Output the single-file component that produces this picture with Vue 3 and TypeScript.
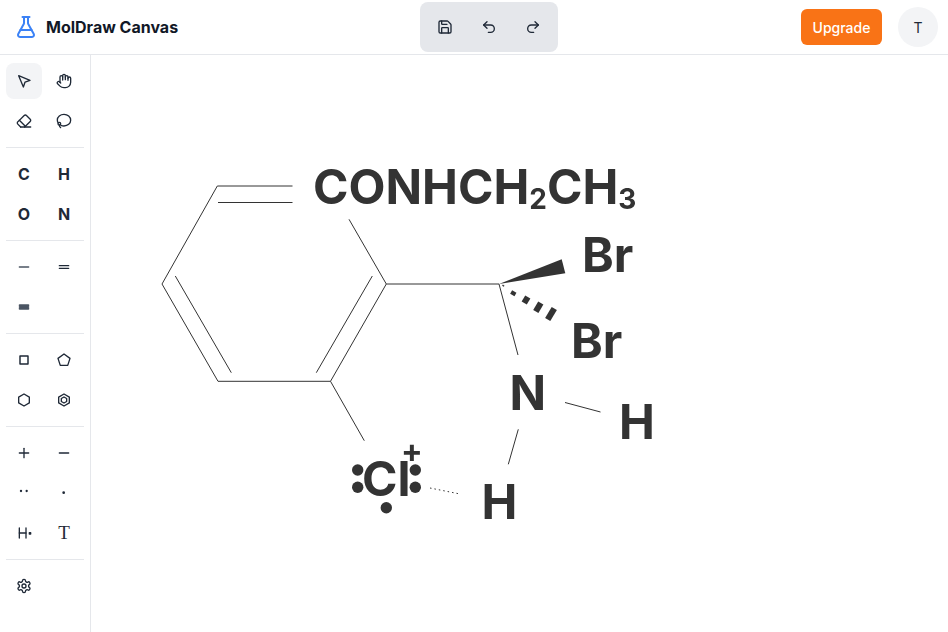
<script setup lang="ts">
interface Tool {
  id: string;
  label?: string;
  serif?: boolean;
  muted?: boolean;
  paths?: string[];
  width?: number;
}

const toolGroups: Tool[][] = [
  [
    { id: 'select', paths: ['m4 4 7.07 17 2.51-7.39L21 11.07z'] },
    {
      id: 'pan',
      paths: [
        'M18 11V6a2 2 0 0 0-2-2a2 2 0 0 0-2 2',
        'M14 10V4a2 2 0 0 0-2-2a2 2 0 0 0-2 2v2',
        'M10 10.5V6a2 2 0 0 0-2-2a2 2 0 0 0-2 2v8',
        'M18 8a2 2 0 1 1 4 0v6a8 8 0 0 1-8 8h-2c-2.8 0-4.5-.86-5.99-2.34l-3.6-3.6a2 2 0 0 1 2.83-2.82L7 15',
      ],
    },
    {
      id: 'erase',
      paths: [
        'm7 21-4.3-4.3c-1-1-1-2.5 0-3.4l9.6-9.6c1-1 2.5-1 3.4 0l5.6 5.6c1 1 1 2.5 0 3.4L13 21',
        'M22 21H7',
        'm5 11 9 9',
      ],
    },
    {
      id: 'lasso',
      paths: [
        'M7 22a5 5 0 0 1-2-4',
        'M3.3 15A8 8 0 0 1 2 10.500C2 5.500 6.500 2 12 2s10 3.800 10 8.800-4.500 8.700-10 8.700a11 11 0 0 1-4.500-1',
        'M5 18a2 2 0 1 0 0-4 2 2 0 0 0 0 4z',
      ],
    },
  ],
  [
    { id: 'c', label: 'C' },
    { id: 'h', label: 'H' },
    { id: 'o', label: 'O' },
    { id: 'n', label: 'N' },
  ],
  [
    { id: 'single', paths: ['M5 12h14'], muted: true },
    { id: 'double', paths: ['M5 10h14', 'M5 14h14'], width: 2 },
    { id: 'triple', paths: ['M5.500 9.500h13', 'M5.500 12h13', 'M5.500 14.500h13'], width: 3, muted: true },
  ],
  [
    { id: 'square', paths: ['M6 6h12v12H6z'], width: 2.200 },
    { id: 'pentagon', paths: ['M12 3l9 6.6-3.4 10.4H6.4L3 9.6z'] },
    { id: 'hexagon', paths: ['M12 3l8 4.6v8.8L12 21l-8-4.6V7.6z'] },
    { id: 'benzene', paths: ['M12 3l8 4.6v8.8L12 21l-8-4.6V7.6z', 'M12 7.500l4 2.300v4.400l-4 2.300-4-2.300V9.800z'] },
  ],
  [
    { id: 'plus', paths: ['M5 12h14', 'M12 5v14'] },
    { id: 'minus', paths: ['M5 12h14'] },
    { id: 'pair', paths: ['M7.500 9h.01', 'M16 9h.01'], width: 3.500 },
    { id: 'radical', paths: ['M11.500 11.500h.01'], width: 4 },
    { id: 'lewis', paths: ['M5 4.500v15', 'M15 4.500v15', 'M5 12h10', 'M20 11.500h2v2h-2z'] },
    { id: 'text', label: 'T', serif: true },
  ],
  [
    {
      id: 'settings',
      paths: [
        'M12.22 2h-.44a2 2 0 0 0-2 2v.18a2 2 0 0 1-1 1.73l-.43.25a2 2 0 0 1-2 0l-.15-.08a2 2 0 0 0-2.73.73l-.22.38a2 2 0 0 0 .73 2.73l.15.1a2 2 0 0 1 1 1.72v.51a2 2 0 0 1-1 1.74l-.15.09a2 2 0 0 0-.73 2.73l.22.38a2 2 0 0 0 2.73.73l.15-.08a2 2 0 0 1 2 0l.43.25a2 2 0 0 1 1 1.73V20a2 2 0 0 0 2 2h.44a2 2 0 0 0 2-2v-.18a2 2 0 0 1 1-1.73l.43-.25a2 2 0 0 1 2 0l.15.08a2 2 0 0 0 2.73-.73l.22-.39a2 2 0 0 0-.73-2.73l-.15-.08a2 2 0 0 1-1-1.74v-.5a2 2 0 0 1 1-1.74l.15-.09a2 2 0 0 0 .73-2.73l-.22-.38a2 2 0 0 0-2.73-.73l-.15.08a2 2 0 0 1-2 0l-.43-.25a2 2 0 0 1-1-1.73V4a2 2 0 0 0-2-2z',
        'M9 12a3 3 0 1 0 6 0a3 3 0 1 0-6 0',
      ],
    },
  ],
];

const actions = [
  {
    id: 'save',
    paths: [
      'M15.2 3a2 2 0 0 1 1.4.6l3.8 3.8a2 2 0 0 1 .6 1.4V19a2 2 0 0 1-2 2H5a2 2 0 0 1-2-2V5a2 2 0 0 1 2-2z',
      'M17 21v-7a1 1 0 0 0-1-1H8a1 1 0 0 0-1 1v7',
      'M7 3v4a1 1 0 0 0 1 1h7',
    ],
  },
  { id: 'undo', paths: ['M9 14 4 9l5-5', 'M4 9h10.5a5.5 5.5 0 0 1 5.5 5.5a5.5 5.5 0 0 1-5.5 5.5H11'] },
  { id: 'redo', paths: ['m15 14 5-5-5-5', 'M20 9H9.5A5.5 5.5 0 0 0 4 14.5A5.5 5.5 0 0 0 9.5 20H13'] },
];

// bonds, in page coordinates (the svg viewBox starts where the canvas starts)
const bonds = [
  'M217.300 186H292.500',
  'M218 202.500H292.500',
  'M217.300 186L162 284L218 381.300H330.500L386.300 284L349 219.300',
  'M175.300 276L231.300 372.700',
  'M372.300 276L316.300 372.700',
  'M330.500 381.300L364.300 440.700',
  'M386.300 284H499',
  'M499 284L518 355',
  'M565 402.500L600.500 412',
  'M518.300 429.300L508.300 464.300',
];

const hashes = [
  { d: 'M502.900 286.300L503.700 285.100', w: 2 },
  { d: 'M512.300 295L514.300 291.600', w: 5 },
  { d: 'M524.200 303L527.800 297', w: 6 },
  { d: 'M535.800 311.600L540.800 303', w: 6 },
  { d: 'M547.700 319.600L554.300 308.400', w: 6 },
];

const lonePairs = [
  [357.7, 470],
  [357.7, 487.3],
  [415.3, 470],
  [415.3, 487.3],
  [386.3, 507.7],
];
</script>

<template>
  <div class="app">
    <header class="topbar">
      <div class="brand">
        <svg class="logo" viewBox="0 0 24 24">
          <path d="M14 2v6a2 2 0 0 0 .245.96l5.51 10.08A2 2 0 0 1 18 22H6a2 2 0 0 1-1.755-2.96l5.51-10.08A2 2 0 0 0 10 8V2" />
          <path d="M6.453 15h11.094" />
          <path d="M8.500 2h7" />
        </svg>
        <span class="brand-name">MolDraw Canvas</span>
      </div>
      <div class="actions">
        <button v-for="action in actions" :key="action.id" class="action">
          <svg class="icon" viewBox="0 0 24 24">
            <path v-for="d in action.paths" :key="d" :d="d" />
          </svg>
        </button>
      </div>
      <div class="account">
        <button class="upgrade">Upgrade</button>
        <div class="avatar">T</div>
      </div>
    </header>

    <div class="workspace">
      <aside class="sidebar">
        <div v-for="(group, i) in toolGroups" :key="i" class="tool-group">
          <button
            v-for="tool in group"
            :key="tool.id"
            class="tool"
            :class="{ active: tool.id === 'select', serif: tool.serif, muted: tool.muted }"
          >
            <template v-if="tool.label">{{ tool.label }}</template>
            <svg v-else class="icon" viewBox="0 0 24 24" :style="{ strokeWidth: tool.width }">
              <path v-for="d in tool.paths" :key="d" :d="d" />
            </svg>
          </button>
        </div>
      </aside>

      <main class="canvas">
        <svg class="drawing" viewBox="91 55 857 577">
          <path v-for="d in bonds" :key="d" :d="d" class="bond" />
          <path d="M499 284L561.700 259.300L565.300 273.300Z" class="wedge" />
          <path v-for="h in hashes" :key="h.d" :d="h.d" class="hash" :style="{ strokeWidth: h.w }" />
          <path d="M430 488L460 494" class="dots" />

          <text x="313" y="203.500" class="atom">CONHCH<tspan class="sub" dy="5">2</tspan><tspan dy="-5">CH</tspan><tspan class="sub" dy="5">3</tspan></text>
          <text x="582" y="271.500" class="atom">Br</text>
          <text x="571" y="357.500" class="atom">Br</text>
          <text x="509.500" y="410" class="atom">N</text>
          <text x="619" y="439" class="atom">H</text>
          <text x="481.500" y="519" class="atom">H</text>
          <text x="362" y="496" class="atom">Cl</text>
          <text x="401" y="462" class="charge">+</text>
          <circle v-for="p in lonePairs" :key="p[0] + '-' + p[1]" :cx="p[0]" :cy="p[1]" r="5.700" class="wedge" />
        </svg>
      </main>
    </div>
  </div>
</template>

<style scoped>
.app {
  display: flex;
  flex-direction: column;
  height: 632px;
  font-family: Inter, "Liberation Sans", sans-serif;
  color: #111827;
  background: #fff;
  overflow: hidden;
}

.topbar {
  display: flex;
  align-items: center;
  justify-content: space-between;
  height: 54px;
  padding: 0 10px 0 14px;
  border-bottom: 1px solid #e5e7eb;
  flex: none;
}

.brand,
.account {
  display: flex;
  align-items: center;
}

.brand {
  gap: 8px;
  width: 176px;
}

.account {
  justify-content: flex-end;
  gap: 16px;
  width: 150px;
}

.logo {
  width: 24px;
  height: 24px;
  fill: none;
  stroke: #3b82f6;
  stroke-width: 2;
  stroke-linecap: round;
  stroke-linejoin: round;
}

.brand-name {
  font-size: 16px;
  font-weight: 700;
  white-space: nowrap;
}

.actions {
  display: flex;
  gap: 4px;
  padding: 5px;
  background: #e5e7eb;
  border-radius: 8px;
}

.action {
  display: flex;
  align-items: center;
  justify-content: center;
  width: 40px;
  height: 40px;
  padding: 0;
  border: none;
  background: none;
  color: #1f2937;
}

.upgrade {
  height: 36px;
  width: 81px;
  padding: 0;
  border: none;
  border-radius: 6px;
  background: #f97316;
  color: #fff;
  font: 500 14px Inter, sans-serif;
}

.avatar {
  display: flex;
  align-items: center;
  justify-content: center;
  width: 40px;
  height: 40px;
  border-radius: 50%;
  background: #f3f4f6;
  color: #1f2937;
  font-size: 14px;
}

.workspace {
  display: flex;
  flex: 1;
  min-height: 0;
}

.sidebar {
  flex: none;
  width: 78px;
  padding: 8px 6px;
  border-right: 1px solid #e5e7eb;
}

.tool-group {
  display: grid;
  grid-template-columns: 36px 36px;
  gap: 4px;
  padding: 8px 0;
  border-bottom: 1px solid #e5e7eb;
}

.tool-group:first-child {
  padding-top: 0;
}

.tool-group:last-child {
  border-bottom: none;
}

.tool {
  display: flex;
  align-items: center;
  justify-content: center;
  width: 36px;
  height: 36px;
  padding: 0;
  border: none;
  border-radius: 8px;
  background: none;
  color: #1f2937;
  font: 700 16px Inter, sans-serif;
}

.tool.active {
  background: #f3f4f6;
}

.tool.muted {
  color: #4b5563;
}

.tool.serif {
  font: 400 19px "Liberation Serif", serif;
}

.icon {
  width: 16px;
  height: 16px;
  fill: none;
  stroke: currentColor;
  stroke-width: 2;
  stroke-linecap: round;
  stroke-linejoin: round;
}

.canvas {
  flex: 1;
  min-width: 0;
}

.drawing {
  display: block;
  width: 100%;
  height: 100%;
  will-change: transform;
}

.bond {
  fill: none;
  stroke: #333;
  stroke-width: 1;
}

.wedge {
  fill: #333;
}

.hash {
  fill: none;
  stroke: #333;
}

.dots {
  fill: none;
  stroke: #333;
  stroke-width: 1;
  stroke-dasharray: 1.500 3;
}

.atom {
  fill: #333;
  font: 700 48px Inter, sans-serif;
}

.sub {
  font-size: 28px;
}

.charge {
  fill: #333;
  font: 700 32px Inter, sans-serif;
}
</style>
